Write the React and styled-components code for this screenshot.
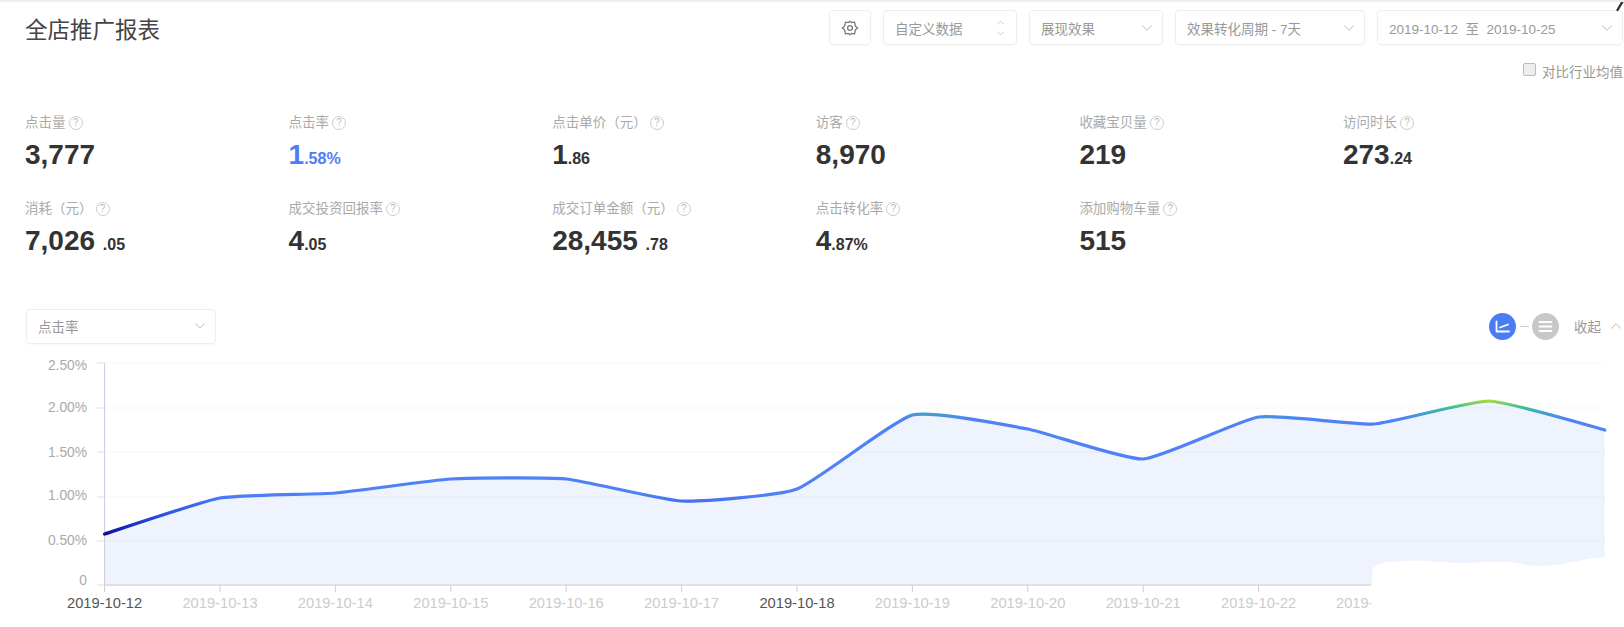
import React from 'react'
import styled, { createGlobalStyle } from 'styled-components'
import { ChevronDown, ChevronUp } from 'lucide-react'

const FONT = `"Liberation Sans", "Noto Sans CJK SC", sans-serif`

const metrics = [
  { label: '点击量', int: '3,777' },
  { label: '点击率', int: '1', frac: '.58%', active: true },
  { label: '点击单价（元）', int: '1', frac: '.86' },
  { label: '访客', int: '8,970' },
  { label: '收藏宝贝量', int: '219' },
  { label: '访问时长', int: '273', frac: '.24' },
  { label: '消耗（元）', int: '7,026 ', frac: '.05' },
  { label: '成交投资回报率', int: '4', frac: '.05' },
  { label: '成交订单金额（元）', int: '28,455 ', frac: '.78' },
  { label: '点击转化率', int: '4', frac: '.87%' },
  { label: '添加购物车量', int: '515' },
]

// text, grid line y, label baseline y
const yTicks = [
  ['2.50%', 363, 370],
  ['2.00%', 408, 412],
  ['1.50%', 452, 457],
  ['1.00%', 497, 500],
  ['0.50%', 541, 545],
  ['0', 585, 585],
]

const lineY = [534, 498, 493, 479, 479, 501, 489, 415, 429, 459, 417, 424, 401, 430]
const X0 = 104.6
const STEP = 115.4
const BASE = 585
const points = lineY.map((y, i) => [X0 + i * STEP, y])

// the last dates are hidden by the white patch, the one before it shows only its start
const dateLabels = lineY.slice(0, 11).map((_, i) => `2019-10-${12 + i}`)

// catmull-rom with a low tension, the line only bends close to each point
const buildLine = (pts, t = 0.08) => {
  let d = `M${pts[0][0]} ${pts[0][1]}`
  for (let i = 0; i < pts.length - 1; i++) {
    const p0 = pts[i - 1] || pts[i]
    const p1 = pts[i]
    const p2 = pts[i + 1]
    const p3 = pts[i + 2] || p2
    const c1 = [p1[0] + (p2[0] - p0[0]) * t, p1[1] + (p2[1] - p0[1]) * t]
    const c2 = [p2[0] - (p3[0] - p1[0]) * t, p2[1] - (p3[1] - p1[1]) * t]
    d += ` C${c1[0]} ${c1[1]} ${c2[0]} ${c2[1]} ${p2[0]} ${p2[1]}`
  }
  return d
}

const linePath = buildLine(points)
const areaPath = `${linePath} L${points[13][0]} ${BASE} L${X0} ${BASE} Z`

const GlobalStyle = createGlobalStyle`
  html, body {
    margin: 0;
    padding: 0;
    background: #fff;
  }
  body {
    font-family: ${FONT};
    overflow: hidden;
  }
`

const Page = styled.div`
  position: relative;
  width: 1624px;
  height: 627px;
  overflow: hidden;
  background: #fff;
  border-top: 2px solid #eee;
  box-sizing: border-box;
`
const Smudge = styled.svg`
  position: absolute;
  top: -2px;
  right: 0;
`
const Header = styled.div`
  display: flex;
  justify-content: space-between;
  align-items: center;
  padding: 8px 1px 0 25px;
`
const Title = styled.h1`
  margin: 0;
  font-size: 22.5px;
  font-weight: 400;
  color: #444;
`
const Toolbar = styled.div`
  display: flex;
  gap: 12px;
`
const Control = styled.div`
  display: flex;
  align-items: center;
  justify-content: space-between;
  box-sizing: border-box;
  width: ${(p) => p.$width}px;
  height: 35px;
  padding: 0 6px 0 11px;
  border: 1px solid #eee;
  border-radius: 4px;
  box-shadow: 0 1px 2px rgba(0, 0, 0, 0.03);
  font-size: 13.5px;
  color: #999;
  white-space: pre;
`
const IconButton = styled(Control)`
  justify-content: center;
  padding: 0;
  width: 42px;
`
const Stack = styled.span`
  display: flex;
  flex-direction: column;
  margin-right: 4px;
  color: #aaa;
`
const CompareRow = styled.label`
  display: flex;
  justify-content: flex-end;
  align-items: center;
  gap: 6px;
  height: 20px;
  margin-top: 16px;
  padding-right: 1px;
  font-size: 13.5px;
  color: #999;
`
const Check = styled.span`
  width: 11px;
  height: 11px;
  margin-top: -3px;
  border: 1px solid #bbb;
  border-radius: 2px;
  background: #eee;
`
const Metrics = styled.div`
  display: grid;
  grid-template-columns: repeat(6, 263.6px);
  row-gap: 24px;
  margin-top: 30px;
  padding-left: 25px;
`
const Metric = styled.div`
  display: flex;
  flex-direction: column;
  gap: 5px;
`
const Label = styled.div`
  display: flex;
  align-items: center;
  gap: 3px;
  height: 20px;
  font-size: 13.5px;
  color: #aaa;
`
const Help = styled.span`
  display: inline-flex;
  align-items: center;
  justify-content: center;
  box-sizing: border-box;
  width: 14px;
  height: 14px;
  margin-top: 3px;
  border: 1px solid #ccc;
  border-radius: 50%;
  font-size: 10px;
  color: #bbb;
`
const Value = styled.div`
  height: 37px;
  line-height: 37px;
  font-size: 28px;
  font-weight: 700;
  color: ${(p) => (p.$active ? '#4d7cf6' : '#333')};
  white-space: pre;
`
const Frac = styled.span`
  font-size: 16px;
`
const ChartHead = styled.div`
  display: flex;
  justify-content: space-between;
  align-items: center;
  height: 36px;
  margin-top: 49px;
  padding: 0 0 0 26px;
`
const Toggles = styled.div`
  display: flex;
  align-items: center;
  margin-right: -1px;
`
const Round = styled.span`
  display: flex;
  align-items: center;
  justify-content: center;
  width: 27px;
  height: 27px;
  border-radius: 50%;
  background: ${(p) => p.$color};
`
const Dash = styled.span`
  width: 9px;
  height: 1px;
  margin: 0 3.5px;
  background: #ccc;
`
const Collapse = styled.span`
  display: flex;
  align-items: center;
  gap: 6px;
  margin-left: 15px;
  font-size: 13.5px;
  color: #999;
`
const Chart = styled.svg`
  display: block;
  margin-top: 6px;
`
const YLabel = styled.text`
  font-family: ${FONT};
  font-size: 13.8px;
  fill: #aaa;
`
const XLabel = styled.text`
  font-family: ${FONT};
  font-size: 14.7px;
  fill: ${(p) => (p.$strong ? '#555' : '#ccc')};
`

const chevron = { size: 18, strokeWidth: 1.1, color: '#aaa' }

const Gear = () => (
  <svg width="18" height="16" viewBox="0 0 18 16" fill="none" stroke="#777" strokeWidth="1.3" strokeLinejoin="round">
    <path d="M1.2 8 L3.6 6.2 L4.4 2.2 L7.4 2.6 L9 1.2 L10.6 2.6 L13.6 2.2 L14.4 6.2 L16.8 8 L14.4 9.8 L13.6 13.8 L10.6 13.4 L9 14.8 L7.4 13.4 L4.4 13.8 L3.6 9.8 Z" />
    <circle cx="9" cy="8" r="2.4" />
  </svg>
)

const LineIcon = () => (
  <svg width="15" height="13" viewBox="0 0 15 13" fill="none" stroke="#fff" strokeWidth="1.8" strokeLinecap="round" strokeLinejoin="round">
    <path d="M1.5 1.5 V11.5 H14" />
    <path d="M5 7.5 L13 4.5" />
  </svg>
)

const ListIcon = () => (
  <svg width="15" height="13" viewBox="0 0 15 13" fill="none" stroke="#fff" strokeWidth="1.8" strokeLinecap="round">
    <path d="M1.5 2 H13.5 M1.5 6.5 H13.5 M1.5 11 H13.5" />
  </svg>
)

const App = () => {
  return (
    <Page>
      <GlobalStyle />
      <Smudge width="8" height="12" viewBox="0 0 8 12">
        <path d="M7.5 0 L1.5 10" stroke="#333" strokeWidth="2.4" strokeLinecap="round" />
      </Smudge>

      <Header>
        <Title>全店推广报表</Title>
        <Toolbar>
          <IconButton>
            <Gear />
          </IconButton>
          <Control $width={134}>
            自定义数据
            <Stack>
              <ChevronUp size={11} strokeWidth={1.3} />
              <ChevronDown size={11} strokeWidth={1.3} />
            </Stack>
          </Control>
          <Control $width={134}>
            展现效果
            <ChevronDown {...chevron} />
          </Control>
          <Control $width={190}>
            效果转化周期 - 7天
            <ChevronDown {...chevron} />
          </Control>
          <Control $width={246}>
            2019-10-12  至  2019-10-25
            <ChevronDown {...chevron} />
          </Control>
        </Toolbar>
      </Header>

      <CompareRow>
        <Check />
        对比行业均值
      </CompareRow>

      <Metrics>
        {metrics.map((m) => (
          <Metric key={m.label}>
            <Label>
              {m.label}
              <Help>?</Help>
            </Label>
            <Value $active={m.active}>
              {m.int}
              {m.frac && <Frac>{m.frac}</Frac>}
            </Value>
          </Metric>
        ))}
      </Metrics>

      <ChartHead>
        <Control $width={190}>
          点击率
          <ChevronDown {...chevron} />
        </Control>
        <Toggles>
          <Round $color="#4a7cf6">
            <LineIcon />
          </Round>
          <Dash />
          <Round $color="#c8c8c8">
            <ListIcon />
          </Round>
          <Collapse>
            收起
            <ChevronUp {...chevron} />
          </Collapse>
        </Toggles>
      </ChartHead>

      <Chart width="1624" height="277" viewBox="0 350 1624 277">
        <defs>
          <linearGradient id="lineColor" gradientUnits="userSpaceOnUse" x1="0" y1="398" x2="0" y2="536">
            <stop offset="0" stopColor="#cfe01c" />
            <stop offset="0.07" stopColor="#36c0a0" />
            <stop offset="0.15" stopColor="#4f82f6" />
            <stop offset="0.7" stopColor="#4f80f8" />
            <stop offset="0.85" stopColor="#2a50e0" />
            <stop offset="1" stopColor="#0a0a9a" />
          </linearGradient>
        </defs>

        <path d={areaPath} fill="#eef3fd" />

        {yTicks.map(([text, y, labelY]) => (
          <g key={text}>
            {y !== BASE && <line x1={X0} x2="1604.6" y1={y} y2={y} stroke="rgba(20,30,60,0.035)" />}
            <line x1="97" x2={X0} y1={y} y2={y} stroke="#ddd" />
            <YLabel x="87" y={labelY} textAnchor="end">
              {text}
            </YLabel>
          </g>
        ))}

        <line x1={X0} x2={X0} y1="363" y2={BASE} stroke="#ccd" />
        <line x1={X0} x2="1604.6" y1={BASE} y2={BASE} stroke="#dde1e8" strokeWidth="2" />

        {points.map(([x]) => (
          <line key={x} x1={x} x2={x} y1={BASE} y2={BASE + 7} stroke="#ccd" />
        ))}
        {dateLabels.map((date, i) => (
          <XLabel key={date} x={X0 + i * STEP} y="608" textAnchor="middle" $strong={i === 0 || i === 6}>
            {date}
          </XLabel>
        ))}
        <XLabel x="1336" y="608">
          2019-
        </XLabel>

        <path d={linePath} fill="none" stroke="url(#lineColor)" strokeWidth="3.2" strokeLinecap="round" />

        {/* white patch painted over the bottom right corner */}
        <path
          d="M1371 627 L1371 590 L1373 568 Q1380 562 1390 562 Q1410 560 1427 561 Q1450 563 1470 563 Q1490 561 1510 562 Q1525 565 1537 566 Q1555 566 1573 562 Q1590 558 1605 557 L1612 557 L1612 627 Z"
          fill="#fff"
        />
      </Chart>
    </Page>
  )
}

export default App
